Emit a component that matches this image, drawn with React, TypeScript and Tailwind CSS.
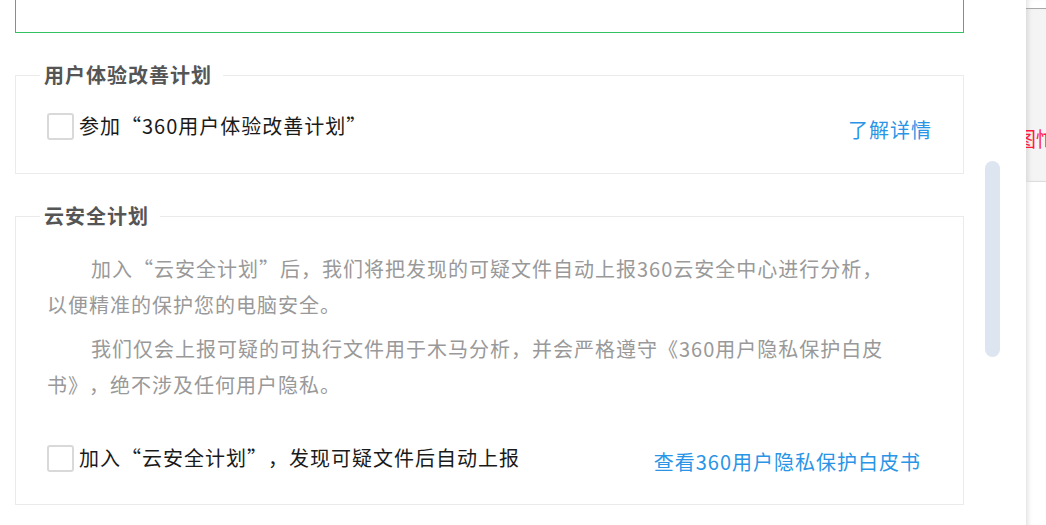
import React from "react";

const font = "font-['Noto_Sans_CJK_SC','Liberation_Sans',sans-serif] [text-spacing-trim:space-all]";

function CheckRow({ label, link, linkClass }: { label: string; link: string; linkClass: string }) {
  return (
    <div className="flex h-[40px] items-center justify-between">
      <label className="flex items-center gap-[5px]">
        <span className="block h-[27px] w-[27px] rounded-[3px] border-2 border-[#d9d9d9] bg-white" />
        <span className="text-[20px] leading-[40px] tracking-[1px] text-[#1a1a1a]">{label}</span>
      </label>
      <a className={`mt-[8px] text-[20px] leading-[40px] tracking-[1px] text-[#2a95e6] ${linkClass}`}>{link}</a>
    </div>
  );
}

export default function App() {
  return (
    <div className={`flex h-[525px] w-[1046px] overflow-hidden bg-white ${font}`}>
      <div className="flex w-[1026px] pl-[15px]">
        <div className="w-[949px]">
          <div className="h-[33px] border-x border-b border-[#33c163]" />

          <fieldset className="mt-[28px] border border-[#ebebeb] pb-[27px] pl-[31px] pr-[31px]">
            <legend className="-ml-[7px] px-[4px] pr-[11px] text-[20px] font-bold leading-[28px] tracking-[1px] text-[#555]">
              用户体验改善计划
            </legend>
            <div className="pt-[17px]">
              <CheckRow label="参加“360用户体验改善计划”" link="了解详情" linkClass="" />
            </div>
          </fieldset>

          <fieldset className="mt-[28px] border border-[#ebebeb] pb-[26px] pl-[31px] pr-[42px]">
            <legend className="-ml-[7px] px-[4px] pr-[11px] text-[20px] font-bold leading-[28px] tracking-[1px] text-[#555]">
              云安全计划
            </legend>
            <div className="pt-[21px] text-[20px] leading-[36px] tracking-[1px] text-[#999]">
              <p className="indent-[44px] whitespace-nowrap">
                加入“云安全计划”后，我们将把发现的可疑文件自动上报360云安全中心进行分析，
                <br />
                以便精准的保护您的电脑安全。
              </p>
              <p className="mt-[8px] indent-[44px] whitespace-nowrap">
                我们仅会上报可疑的可执行文件用于木马分析，并会严格遵守《360用户隐私保护白皮
                <br />
                书》，绝不涉及任何用户隐私。
              </p>
            </div>
            <div className="mt-[35px]">
              <CheckRow
                label="加入“云安全计划”，发现可疑文件后自动上报"
                link="查看360用户隐私保护白皮书"
                linkClass=""
              />
            </div>
          </fieldset>
        </div>

        <div className="ml-[21px] mt-[161px] h-[196px] w-[15px] rounded-full bg-[#dde6f0]" />
      </div>

      <div className="w-[20px] shadow-[inset_5px_0_5px_-3px_rgba(0,0,0,0.12)]">
        <div className="mt-[8px] h-[174px] overflow-hidden border-y border-t-[#a8a8a8] border-b-[#dcdcdc] bg-[#f4f4f4] pt-[118px] shadow-[inset_5px_0_5px_-3px_rgba(0,0,0,0.12)]">
          <span className="-ml-[10px] block whitespace-nowrap text-[20px] leading-[24px] text-[#ff1a3c]">图忙</span>
        </div>
      </div>
    </div>
  );
}
